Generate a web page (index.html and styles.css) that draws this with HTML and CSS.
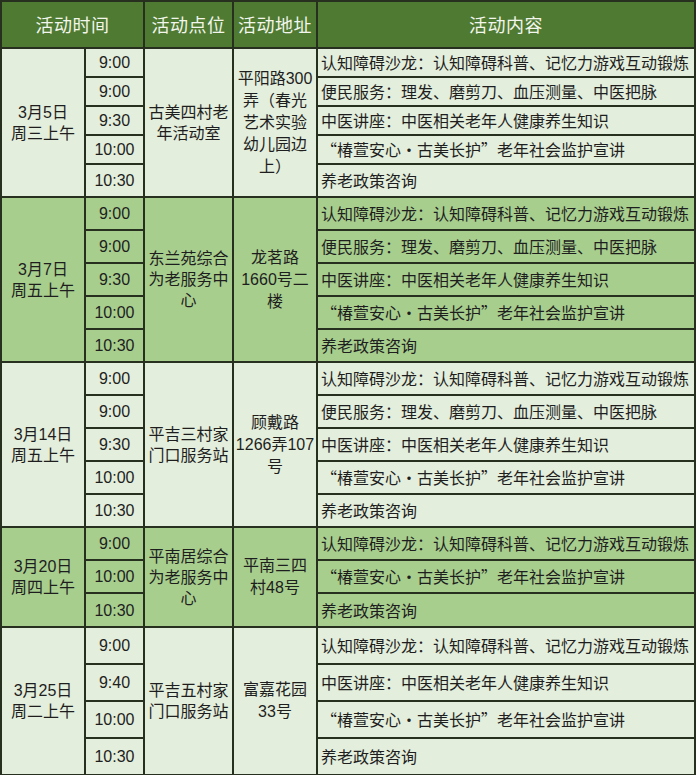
FILE: index.html
```html
<!DOCTYPE html>
<html lang="zh-CN">
<head>
<meta charset="utf-8">
<title>活动安排</title>
<link rel="stylesheet" href="styles.css">
</head>
<body>
<div class="schedule">
  <div class="cell head head-time">活动时间</div>
  <div class="cell head head-place">活动点位</div>
  <div class="cell head head-addr">活动地址</div>
  <div class="cell head head-content">活动内容</div>

  <!-- group 1 -->
  <div class="cell date light span5">3月5日<br>周三上午</div>
  <div class="cell time light">9:00</div>
  <div class="cell place light span5">古美四村老年活动室</div>
  <div class="cell addr light span5">平阳路300<br>弄（春光<br>艺术实验<br>幼儿园边<br>上）</div>
  <div class="cell content light">认知障碍沙龙：认知障碍科普、记忆力游戏互动锻炼</div>
  <div class="cell time light">9:00</div>
  <div class="cell content light">便民服务：理发、磨剪刀、血压测量、中医把脉</div>
  <div class="cell time light">9:30</div>
  <div class="cell content light">中医讲座：中医相关老年人健康养生知识</div>
  <div class="cell time light">10:00</div>
  <div class="cell content light">“椿萱安心·古美长护”老年社会监护宣讲</div>
  <div class="cell time light">10:30</div>
  <div class="cell content light">养老政策咨询</div>

  <!-- group 2 -->
  <div class="cell date green span5">3月7日<br>周五上午</div>
  <div class="cell time green">9:00</div>
  <div class="cell place green span5">东兰苑综合为老服务中心</div>
  <div class="cell addr green span5">龙茗路<br>1660号二<br>楼</div>
  <div class="cell content green">认知障碍沙龙：认知障碍科普、记忆力游戏互动锻炼</div>
  <div class="cell time green">9:00</div>
  <div class="cell content green">便民服务：理发、磨剪刀、血压测量、中医把脉</div>
  <div class="cell time green">9:30</div>
  <div class="cell content green">中医讲座：中医相关老年人健康养生知识</div>
  <div class="cell time green">10:00</div>
  <div class="cell content green">“椿萱安心·古美长护”老年社会监护宣讲</div>
  <div class="cell time green">10:30</div>
  <div class="cell content green">养老政策咨询</div>

  <!-- group 3 -->
  <div class="cell date light span5">3月14日<br>周五上午</div>
  <div class="cell time light">9:00</div>
  <div class="cell place light span5">平吉三村家门口服务站</div>
  <div class="cell addr light span5">顾戴路<br>1266弄107<br>号</div>
  <div class="cell content light">认知障碍沙龙：认知障碍科普、记忆力游戏互动锻炼</div>
  <div class="cell time light">9:00</div>
  <div class="cell content light">便民服务：理发、磨剪刀、血压测量、中医把脉</div>
  <div class="cell time light">9:30</div>
  <div class="cell content light">中医讲座：中医相关老年人健康养生知识</div>
  <div class="cell time light">10:00</div>
  <div class="cell content light">“椿萱安心·古美长护”老年社会监护宣讲</div>
  <div class="cell time light">10:30</div>
  <div class="cell content light">养老政策咨询</div>

  <!-- group 4 -->
  <div class="cell date green span3">3月20日<br>周四上午</div>
  <div class="cell time green">9:00</div>
  <div class="cell place green span3">平南居综合为老服务中心</div>
  <div class="cell addr green span3">平南三四<br>村48号</div>
  <div class="cell content green">认知障碍沙龙：认知障碍科普、记忆力游戏互动锻炼</div>
  <div class="cell time green">10:00</div>
  <div class="cell content green">“椿萱安心·古美长护”老年社会监护宣讲</div>
  <div class="cell time green">10:30</div>
  <div class="cell content green">养老政策咨询</div>

  <!-- group 5 -->
  <div class="cell date light span4">3月25日<br>周二上午</div>
  <div class="cell time light">9:00</div>
  <div class="cell place light span4">平吉五村家门口服务站</div>
  <div class="cell addr light span4">富嘉花园<br>33号</div>
  <div class="cell content light">认知障碍沙龙：认知障碍科普、记忆力游戏互动锻炼</div>
  <div class="cell time light">9:40</div>
  <div class="cell content light">中医讲座：中医相关老年人健康养生知识</div>
  <div class="cell time light">10:00</div>
  <div class="cell content light">“椿萱安心·古美长护”老年社会监护宣讲</div>
  <div class="cell time light">10:30</div>
  <div class="cell content light">养老政策咨询</div>
</div>
</body>
</html>
```

FILE: styles.css
```css
html, body {
  margin: 0;
  padding: 0;
  background: #ffffff;
}

body {
  font-family: "Liberation Sans", "Noto Sans CJK SC", sans-serif;
  color: #1e1e1e;
}

.schedule {
  box-sizing: border-box;
  width: 696px;
  display: grid;
  grid-template-columns: 82px 57px 87px 82px 376px;
  grid-template-rows:
    45px
    27px 27px 27px 27px 31px
    31px 31px 31px 31px 31px
    31px 31px 31px 31px 31px
    31px 31px 32px
    35px 35px 35px 35px;
  gap: 2px;
  padding: 2px;
  background: #27301f;
}

.cell {
  display: flex;
  align-items: center;
  justify-content: center;
  text-align: center;
  font-size: 16px;
  line-height: 21px;
  overflow: hidden;
}

.light { background: #e4eedc; }
.green { background: #a8ce8e; }

.head {
  background: #4f7a32;
  color: #f2f6ec;
  font-family: "Noto Sans CJK SC", sans-serif;
  font-size: 18px;
  letter-spacing: 0.5px;
}

.head-time { grid-column: 1 / span 2; }
.head-place { grid-column: 3; }
.head-addr { grid-column: 4; }
.head-content { grid-column: 5; }

.date { grid-column: 1; }
.time { grid-column: 2; }
.place { grid-column: 3; padding: 0 3px; }
.addr { grid-column: 4; white-space: nowrap; line-height: 22px; }
.content {
  grid-column: 5;
  justify-content: flex-start;
  text-align: left;
  padding-left: 3px;
  font-family: "Noto Sans CJK SC", sans-serif;
  white-space: nowrap;
}

.span5 { grid-row: span 5; }
.span4 { grid-row: span 4; }
.span3 { grid-row: span 3; }
```
